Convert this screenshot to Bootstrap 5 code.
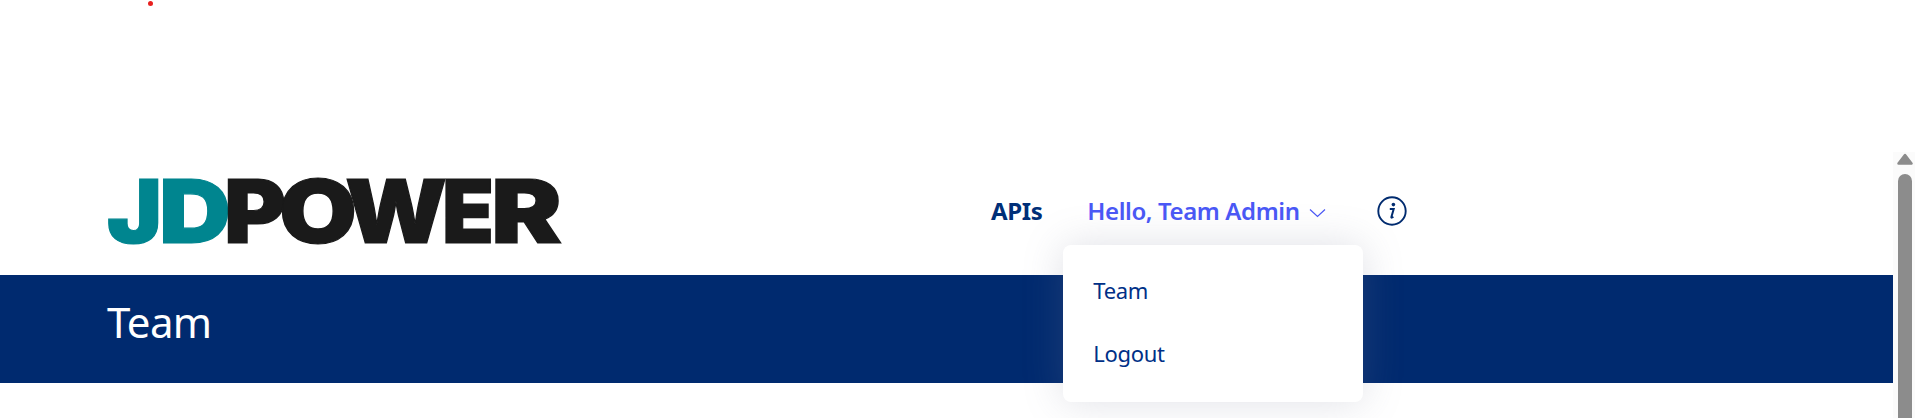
<!DOCTYPE html>
<html lang="en">
<head>
  <meta charset="UTF-8">
  <title>JD Power - Team</title>
  <meta name="viewport" content="width=device-width, initial-scale=1">
  <link href="https://cdn.jsdelivr.net/npm/bootstrap@5.3.0/dist/css/bootstrap.min.css" rel="stylesheet">
  <style>
    html, body {
      height: 418px;
      overflow: hidden;
      background: #fff;
      font-family: "Noto Sans", "Open Sans", sans-serif;
    }
    .page-column {
      width: 1893px;
    }
    .loader-strip {
      height: 178px;
      padding: 1px 0 0 148px;
    }
    .loader-dot {
      display: block;
      width: 5px;
      height: 5px;
      background: #e8201f;
      border-radius: 50%;
    }
    .site-header {
      height: 97px;
      padding: 0 0 0 107px;
      align-items: flex-start;
      flex-wrap: nowrap;
    }
    .site-logo {
      display: block;
      flex: none;
      width: 456px;
      height: 68px;
      overflow: visible;
    }
    .site-logo text {
      font-family: Inter, "Liberation Sans", sans-serif;
      font-weight: 900;
      font-size: 88px;
      stroke-width: 1.2px;
    }
    .logo-jd { fill: #00858f; stroke: #00858f; }
    .logo-power { fill: #1a1a1a; stroke: #1a1a1a; }
    .top-links {
      margin-left: 428px;
      margin-top: 15px;
      gap: 45px;
      align-items: center;
    }
    .site-header .top-links .nav-link {
      padding: 0;
      font-size: 24px;
      line-height: 36px;
      font-weight: 600;
      letter-spacing: -0.4px;
      white-space: nowrap;
    }
    .site-header .top-links .link-apis { color: #002f78; font-weight: 700; }
    .site-header .top-links .link-hello { color: #4a58f6; }
    .hello-item { width: 245px; }
    .hello-chevron { margin-left: 9px; vertical-align: 2px; }
    .info-icon { display: block; }
    .top-links .hello-menu {
      display: block;
      position: absolute;
      top: 52px;
      left: -24px;
      width: 300px;
      min-width: 0;
      height: 157px;
      padding: 14px 0 0;
      border: 0;
      border-radius: 8px;
      box-shadow: 0 0 40px rgba(120, 125, 150, .24);
    }
    .hello-menu .dropdown-item {
      padding: 0 30px;
      height: 63px;
      line-height: 63px;
      font-size: 22px;
      letter-spacing: -0.3px;
      color: #003087;
    }
    .title-band {
      height: 108px;
      padding: 20px 0 0 107px;
      background: #002a6f;
    }
    .title-band h1 {
      margin: 0;
      font-size: 42px;
      line-height: 54px;
      font-weight: 400;
      letter-spacing: -0.6px;
      color: #fff;
    }
    .scroll-rail {
      width: 22px;
      height: 266px;
      margin-top: 152px;
      padding: 1px 0 0 4px;
      background: #fbfbfb;
    }
    .scroll-arrow {
      display: block;
      margin-bottom: 9px;
    }
    .scroll-thumb {
      width: 14px;
      height: 250px;
      margin-left: 1px;
      background: #8c8c8c;
      border-radius: 7px 7px 0 0;
    }
  </style>
</head>
<body>

<div class="d-flex">
  <div class="page-column">
    <div class="loader-strip"><span class="loader-dot"></span></div>

    <nav class="navbar navbar-expand site-header">
      <svg class="site-logo" viewBox="0 0 456 68" role="img" aria-label="JD Power">
        <text class="logo-jd" x="0" y="65" textLength="55" lengthAdjust="spacingAndGlyphs">J</text>
        <text class="logo-jd" x="52" y="65" textLength="72" lengthAdjust="spacingAndGlyphs">D</text>
        <text class="logo-power" x="117" y="65" textLength="62" lengthAdjust="spacingAndGlyphs">P</text>
        <text class="logo-power" x="172" y="65" textLength="78" lengthAdjust="spacingAndGlyphs">O</text>
        <text class="logo-power" x="238" y="65" textLength="102" lengthAdjust="spacingAndGlyphs">W</text>
        <text class="logo-power" x="335" y="65" textLength="52" lengthAdjust="spacingAndGlyphs">E</text>
        <text class="logo-power" x="384" y="65" textLength="71" lengthAdjust="spacingAndGlyphs">R</text>
      </svg>

      <ul class="navbar-nav top-links">
        <li class="nav-item"><a class="nav-link link-apis" href="#">APIs</a></li>
        <li class="nav-item dropdown hello-item">
          <a class="nav-link link-hello" href="#">Hello, Team Admin<svg class="hello-chevron" width="17" height="10" viewBox="0 0 17 10" fill="none" stroke="#4a58f6" stroke-width="1.2"><path d="M1 1.5l7.5 7 7.5-7"/></svg></a>
          <div class="dropdown-menu hello-menu">
            <a class="dropdown-item" href="#">Team</a>
            <a class="dropdown-item" href="#">Logout</a>
          </div>
        </li>
        <li class="nav-item">
          <svg class="info-icon" width="30" height="30" viewBox="0 0 30 30">
            <circle cx="15" cy="15" r="13.7" fill="none" stroke="#002b6f" stroke-width="1.9"/>
            <circle cx="16.4" cy="8.6" r="1.8" fill="#002b6f"/>
            <path d="M12.8 13h3.9l-2.3 8c-.2.8.5 1 1.9-.4" fill="none" stroke="#002b6f" stroke-width="2"/>
          </svg>
        </li>
      </ul>
    </nav>

    <div class="title-band"><h1>Team</h1></div>
  </div>

  <div class="scroll-rail">
    <svg class="scroll-arrow" width="16" height="12" viewBox="0 0 16 12"><path d="M8 2L14.500 10.500H1.500z" fill="#8c8c8c" stroke="#8c8c8c" stroke-width="2.500" stroke-linejoin="round"/></svg>
    <div class="scroll-thumb"></div>
  </div>
</div>

<script src="https://cdn.jsdelivr.net/npm/bootstrap@5.3.0/dist/js/bootstrap.bundle.min.js"></script>
</body>
</html>
